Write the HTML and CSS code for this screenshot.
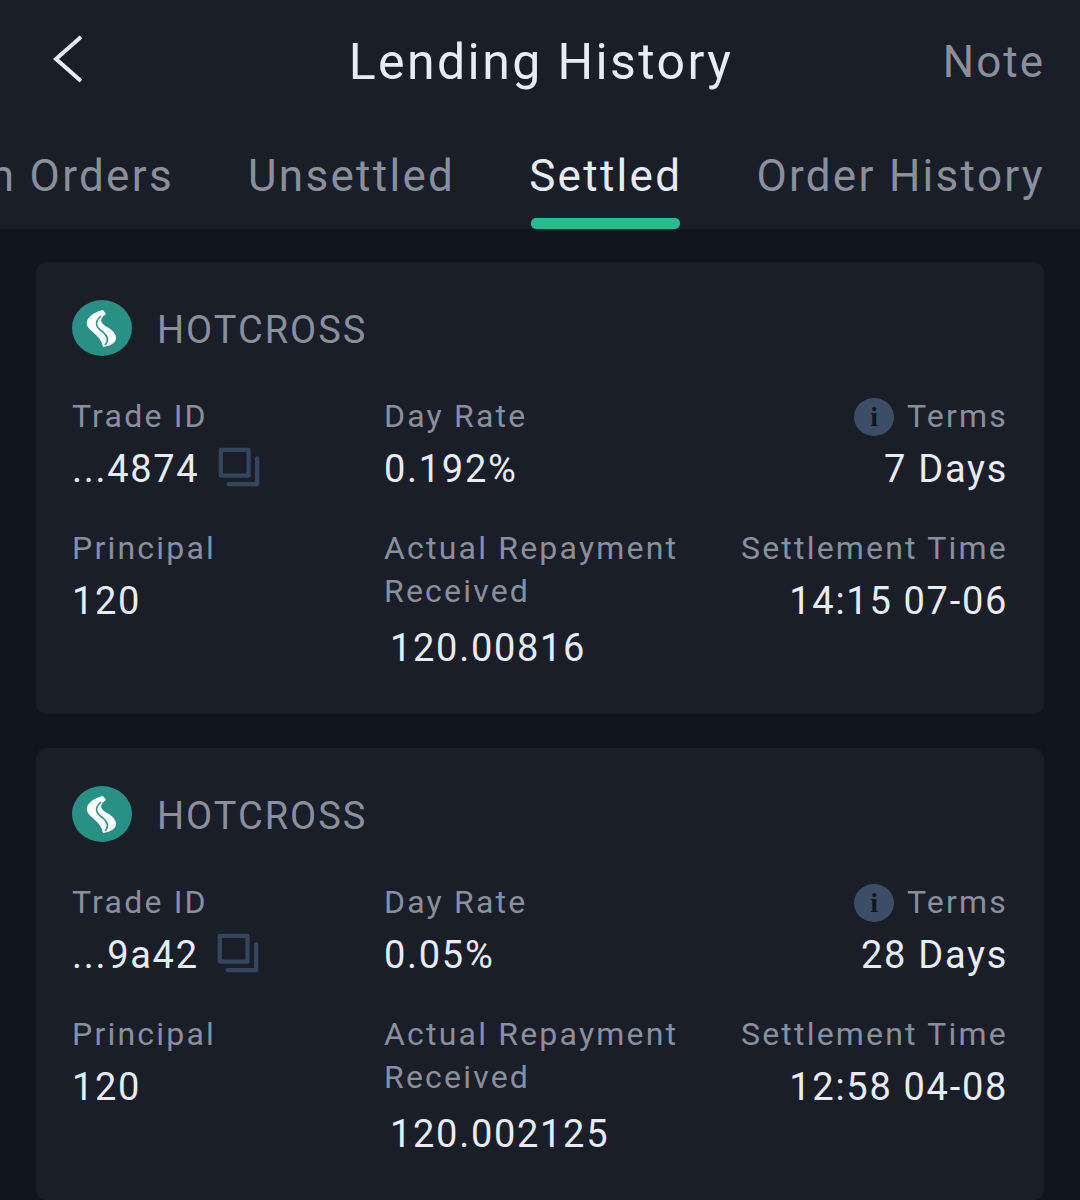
FILE: index.html
```html
<!DOCTYPE html>
<html lang="en-us">

<head>
    <meta charset="utf-8">
    <title>Lending History</title>
    <link rel="stylesheet" href="styles.css">
</head>

<body>
    <header class="top">
        <div class="title-bar">
            <svg class="back" width="32" height="48" viewBox="0 0 32 48">
                <path d="M29 2 L4 24 L29 46" fill="none" stroke="#e8ecf6" stroke-width="4" />
            </svg>
            <h1 class="title">Lending History</h1>
            <span class="note">Note</span>
        </div>
        <nav class="tabs">
            <span class="tab">Open Orders</span>
            <span class="tab">Unsettled</span>
            <span class="tab active">Settled</span>
            <span class="tab">Order History</span>
        </nav>
    </header>

    <main class="list">
        <section class="card">
            <div class="coin">
                <svg class="coin-logo" width="60" height="56" viewBox="0 0 60 56">
                    <ellipse cx="30" cy="28" rx="30" ry="28" fill="#2a8f85" />
                    <path d="M31 10 C19 13 12 20 16 27 C20 33 29 36 31 47 C38 46 44 43 44 38 C44 31 36 28 32 25 C28 22 28 18 34 14 Z" fill="#fff" />
                    <path d="M29 16 C21 23 25 28 31 32 C36 36 37 41 33 45" fill="none" stroke="#2a8f85" stroke-width="1.6" />
                </svg>
                <span class="coin-name">HOTCROSS</span>
            </div>
            <div class="fields">
                <div class="field">
                    <div class="label">Trade ID</div>
                    <div class="value">...4874
                        <svg class="copy" width="42" height="40" viewBox="0 0 44 40">
                            <path d="M3 2 H32 V29 H3 Z" fill="none" stroke="#35465c" stroke-width="4.5" stroke-linejoin="round" />
                            <path d="M41 11 V38 H11" fill="none" stroke="#35465c" stroke-width="4.5" stroke-linejoin="round" stroke-linecap="round" />
                        </svg>
                    </div>
                </div>
                <div class="field">
                    <div class="label">Day Rate</div>
                    <div class="value">0.192%</div>
                </div>
                <div class="field right">
                    <div class="label">
                        <span class="info">i</span>Terms
                    </div>
                    <div class="value">7 Days</div>
                </div>
                <div class="field">
                    <div class="label">Principal</div>
                    <div class="value">120</div>
                </div>
                <div class="field">
                    <div class="label">Actual Repayment<br />Received</div>
                    <div class="value indent">120.00816</div>
                </div>
                <div class="field right">
                    <div class="label">Settlement Time</div>
                    <div class="value">14:15 07-06</div>
                </div>
            </div>
        </section>

        <section class="card">
            <div class="coin">
                <svg class="coin-logo" width="60" height="56" viewBox="0 0 60 56">
                    <ellipse cx="30" cy="28" rx="30" ry="28" fill="#2a8f85" />
                    <path d="M31 10 C19 13 12 20 16 27 C20 33 29 36 31 47 C38 46 44 43 44 38 C44 31 36 28 32 25 C28 22 28 18 34 14 Z" fill="#fff" />
                    <path d="M29 16 C21 23 25 28 31 32 C36 36 37 41 33 45" fill="none" stroke="#2a8f85" stroke-width="1.6" />
                </svg>
                <span class="coin-name">HOTCROSS</span>
            </div>
            <div class="fields">
                <div class="field">
                    <div class="label">Trade ID</div>
                    <div class="value">...9a42
                        <svg class="copy" width="42" height="40" viewBox="0 0 44 40">
                            <path d="M3 2 H32 V29 H3 Z" fill="none" stroke="#35465c" stroke-width="4.5" stroke-linejoin="round" />
                            <path d="M41 11 V38 H11" fill="none" stroke="#35465c" stroke-width="4.5" stroke-linejoin="round" stroke-linecap="round" />
                        </svg>
                    </div>
                </div>
                <div class="field">
                    <div class="label">Day Rate</div>
                    <div class="value">0.05%</div>
                </div>
                <div class="field right">
                    <div class="label">
                        <span class="info">i</span>Terms
                    </div>
                    <div class="value">28 Days</div>
                </div>
                <div class="field">
                    <div class="label">Principal</div>
                    <div class="value">120</div>
                </div>
                <div class="field">
                    <div class="label">Actual Repayment<br />Received</div>
                    <div class="value indent">120.002125</div>
                </div>
                <div class="field right">
                    <div class="label">Settlement Time</div>
                    <div class="value">12:58 04-08</div>
                </div>
            </div>
        </section>
    </main>
</body>

</html>
```

FILE: styles.css
```css
* {
    margin: 0;
    padding: 0;
    box-sizing: border-box;
}

html,
body {
    height: 1200px;
    overflow: hidden;
}

body {
    background-color: #11151e;
    font-family: "Roboto", "Liberation Sans", sans-serif;
    color: #e8ecf6;
}

.top {
    height: 229px;
    background-color: #1a1e29;
    overflow: hidden;
}

.title-bar {
    height: 124px;
    padding: 0 35px 0 52px;
    display: grid;
    grid-template-columns: 1fr auto 1fr;
    align-items: center;
}

.back {
    margin-top: -6px;
}

.title {
    font-size: 50px;
    font-weight: 400;
    letter-spacing: 2.4px;
    margin-right: 15px;
}

.note {
    justify-self: end;
    font-size: 44px;
    letter-spacing: 2px;
    color: #8a8f9c;
}

.tabs {
    height: 105px;
    padding-right: 35px;
    display: flex;
    justify-content: flex-end;
    gap: 74px;
    white-space: nowrap;
}

.tab {
    height: 105px;
    padding-top: 26px;
    display: flex;
    flex-direction: column;
    justify-content: space-between;
    font-size: 44px;
    letter-spacing: 2.3px;
    color: #8a8f9c;
    flex-shrink: 0;
}

.tab.active {
    color: #e8ecf6;
}

.tab.active::after {
    content: "";
    display: block;
    height: 11px;
    margin: 0 2px;
    border-radius: 5px;
    background-color: #2bb98f;
}

.list {
    padding: 33px 36px 0;
    display: flex;
    flex-direction: column;
    gap: 34px;
}

.card {
    height: 452px;
    flex-shrink: 0;
    padding: 38px 36px 0;
    background-color: #1a1e29;
    border-radius: 10px;
}

.coin {
    display: flex;
    align-items: center;
    gap: 25px;
}

.coin-name {
    margin-top: 3px;
    font-size: 38px;
    letter-spacing: 2px;
    color: #8a8f9c;
}

.fields {
    margin-top: 39px;
    display: grid;
    grid-template-columns: 312px 1fr auto;
    grid-template-rows: 132px auto;
}

.field.right {
    text-align: right;
}

.label {
    font-size: 32px;
    line-height: 43px;
    letter-spacing: 2.2px;
    color: #8a8f9c;
}

.value {
    margin-top: 8px;
    font-size: 38px;
    line-height: 46px;
    letter-spacing: 1.7px;
    color: #e8ecf6;
}

.indent {
    margin-top: 12px;
    padding-left: 6px;
}

.copy {
    vertical-align: -5px;
    margin-left: 7px;
}

.info {
    display: inline-block;
    width: 40px;
    height: 38px;
    margin-right: 13px;
    border-radius: 50%;
    background-color: #3c4e66;
    color: #11151e;
    font-family: "Liberation Serif", serif;
    font-weight: bold;
    font-size: 28px;
    line-height: 38px;
    text-align: center;
    letter-spacing: 0;
    vertical-align: 1px;
}
```
